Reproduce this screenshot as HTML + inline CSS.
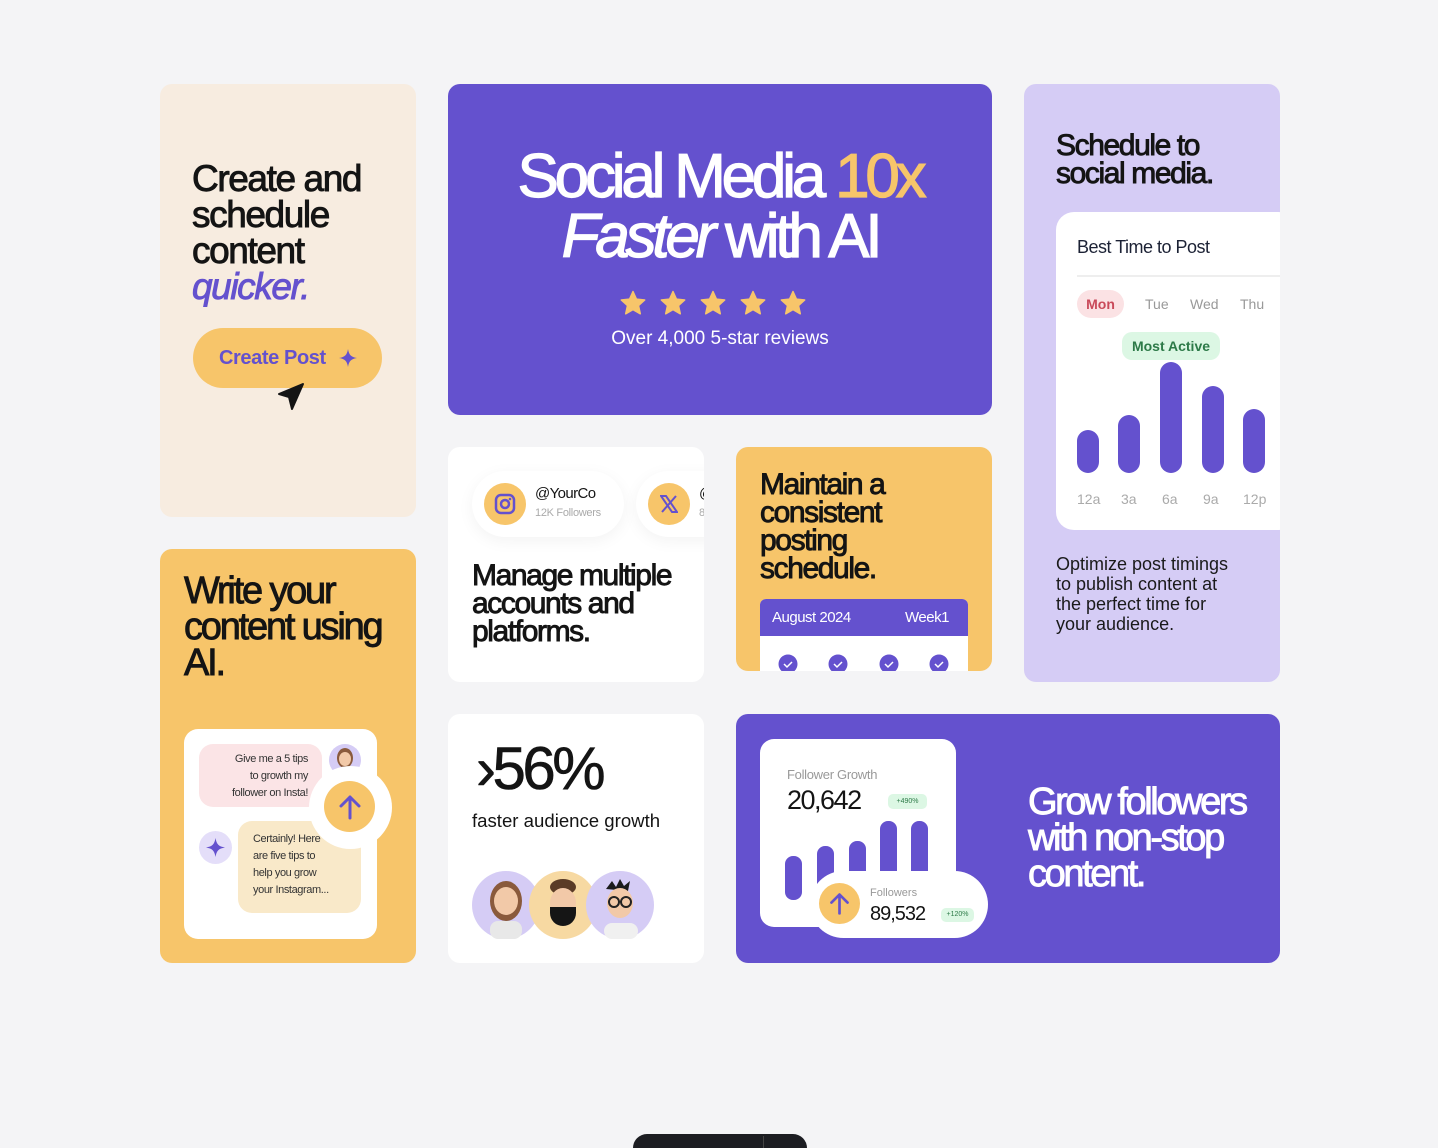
<!DOCTYPE html>
<html><head><meta charset="utf-8">
<style>
*{margin:0;padding:0;box-sizing:border-box}
html{width:1438px;height:1148px;overflow:hidden}
body{width:1438px;height:1148px;background:#f4f4f6;position:relative;overflow:hidden;font-family:"Liberation Sans",sans-serif;color:#141414}
.c{position:absolute;border-radius:12px;overflow:hidden}
.h{font-weight:400;-webkit-text-stroke:0.9px currentColor;line-height:0.95}
.a{position:absolute}
</style></head><body>

<!-- Card A -->
<div class="c" style="left:160px;top:84px;width:256px;height:433px;background:#f7ece0">
  <div class="a h" style="left:32px;top:77px;font-size:37px;line-height:36px;letter-spacing:-1.4px">Create and<br>schedule<br>content<br><span style="color:#6451ce;font-style:italic">quicker.</span></div>
  <div class="a" style="left:33px;top:244px;width:189px;height:60px;border-radius:30px;background:#f7c56a;color:#6451ce;font-weight:700;font-size:20px;letter-spacing:-0.4px;line-height:60px;padding-left:26px">Create Post
    <svg class="a" style="left:146px;top:21px" width="18" height="18" viewBox="0 0 18 18"><path d="M9 0C10 6 12 8 18 9C12 10 10 12 9 18C8 12 6 10 0 9C6 8 8 6 9 0Z" fill="#6451ce"/></svg>
  </div>
  <svg class="a" style="left:116px;top:298px" width="30" height="30" viewBox="0 0 30 30"><path d="M27 2L3 12L13 15L16 27Z" fill="#141414" stroke="#141414" stroke-linejoin="round" stroke-width="2"/></svg>
</div>

<!-- Card B hero -->
<div class="c" style="left:448px;top:84px;width:544px;height:331px;background:#6451ce;color:#fff;text-align:center">
  <div class="a h" style="left:0;width:544px;top:63px;font-size:62px;line-height:60px;letter-spacing:-4.2px;-webkit-text-stroke:1.2px #fff">Social Media <span style="color:#f7c56a;-webkit-text-stroke:1.2px #f7c56a">10x</span><br><i>Faster</i> with AI</div>
  <div class="a" style="left:0;width:544px;top:206px;font-size:0">
    <svg width="200" height="30" viewBox="0 0 200 30"><g fill="#f7c56a">
      <path id="s" d="M13 1.5l3.4 7.6 8.3.9-6.2 5.6 1.8 8.2L13 19.6 5.7 23.8l1.8-8.2L1.3 10l8.3-.9z" stroke="#f7c56a" stroke-linejoin="round" stroke-width="1.5"/>
      <use href="#s" x="40"/><use href="#s" x="80"/><use href="#s" x="120"/><use href="#s" x="160"/></g></svg>
  </div>
  <div class="a" style="left:0;width:544px;top:244px;font-size:19px">Over 4,000 5-star reviews</div>
</div>

<!-- Card C -->
<div class="c" style="left:1024px;top:84px;width:256px;height:598px;background:#d5ccf5">
  <div class="a h" style="left:32px;top:48px;font-size:30px;line-height:28px;letter-spacing:-1.4px">Schedule to<br>social media.</div>
  <div class="a" style="left:32px;top:128px;width:240px;height:318px;background:#fff;border-radius:18px">
    <div class="a" style="left:21px;top:25px;font-size:18px;color:#1c2235;letter-spacing:-0.5px">Best Time to Post</div>
    <div class="a" style="left:21px;top:63px;width:230px;height:2px;background:#eee"></div>
    <div class="a" style="left:21px;top:78px;width:47px;height:28px;border-radius:14px;background:#fbe2e4;color:#c94a5a;font-weight:700;font-size:14px;line-height:28px;text-align:center">Mon</div>
    <div class="a" style="left:89px;top:84px;font-size:14px;color:#999">Tue</div>
    <div class="a" style="left:134px;top:84px;font-size:14px;color:#999">Wed</div>
    <div class="a" style="left:184px;top:84px;font-size:14px;color:#999">Thu</div>
    <div class="a" style="left:66px;top:120px;width:98px;height:28px;border-radius:10px;background:#dcf7e4;color:#2d7a48;font-weight:700;font-size:14px;line-height:28px;text-align:center">Most Active</div>
    <div class="a" style="left:21px;top:218px;width:22px;height:43px;border-radius:11px;background:#6451ce"></div>
    <div class="a" style="left:62px;top:203px;width:22px;height:58px;border-radius:11px;background:#6451ce"></div>
    <div class="a" style="left:104px;top:150px;width:22px;height:111px;border-radius:11px;background:#6451ce"></div>
    <div class="a" style="left:146px;top:174px;width:22px;height:87px;border-radius:11px;background:#6451ce"></div>
    <div class="a" style="left:187px;top:197px;width:22px;height:64px;border-radius:11px;background:#6451ce"></div>
    <div class="a" style="left:21px;top:279px;font-size:14px;color:#aaa">12a</div>
    <div class="a" style="left:65px;top:279px;font-size:14px;color:#aaa">3a</div>
    <div class="a" style="left:106px;top:279px;font-size:14px;color:#aaa">6a</div>
    <div class="a" style="left:147px;top:279px;font-size:14px;color:#aaa">9a</div>
    <div class="a" style="left:187px;top:279px;font-size:14px;color:#aaa">12p</div>
  </div>
  <div class="a" style="left:32px;top:470px;font-size:18px;line-height:20px;color:#1a1a1a;white-space:nowrap">Optimize post timings<br>to publish content at<br>the perfect time for<br>your audience.</div>
</div>

<!-- Card D -->
<div class="c" style="left:448px;top:447px;width:256px;height:235px;background:#fff">
  <div class="a" style="left:24px;top:24px;width:152px;height:66px;border-radius:33px;background:#fff;box-shadow:0 4px 16px rgba(0,0,0,0.05)">
    <div class="a" style="left:12px;top:12px;width:42px;height:42px;border-radius:50%;background:#f7c56a"></div>
    <svg class="a" style="left:22px;top:22px" width="22" height="22" viewBox="0 0 22 22"><rect x="2" y="2" width="18" height="18" rx="5" fill="none" stroke="#6451ce" stroke-width="2.5"/><circle cx="11" cy="11" r="4" fill="none" stroke="#6451ce" stroke-width="2.5"/><circle cx="16" cy="6" r="1.3" fill="#6451ce"/></svg>
    <div class="a" style="left:63px;top:14px;font-size:15px;letter-spacing:-0.6px">@YourCo</div>
    <div class="a" style="left:63px;top:36px;font-size:11px;color:#aaa;letter-spacing:-0.3px">12K Followers</div>
  </div>
  <div class="a" style="left:188px;top:24px;width:120px;height:66px;border-radius:33px;background:#fff;box-shadow:0 4px 16px rgba(0,0,0,0.05)">
    <div class="a" style="left:12px;top:12px;width:42px;height:42px;border-radius:50%;background:#f7c56a"></div>
    <svg class="a" style="left:24px;top:24px" width="18" height="18" viewBox="0 0 18 18"><path d="M1 1h5l11 16h-5Z" fill="none" stroke="#6451ce" stroke-width="2"/><path d="M16 1L2 17" stroke="#6451ce" stroke-width="2"/></svg>
    <div class="a" style="left:63px;top:14px;font-size:15px">@</div>
    <div class="a" style="left:63px;top:36px;font-size:11px;color:#aaa">8</div>
  </div>
  <div class="a h" style="left:24px;top:115px;font-size:30px;line-height:28px;letter-spacing:-1.4px">Manage multiple<br>accounts and<br>platforms.</div>
</div>

<!-- Card E -->
<div class="c" style="left:736px;top:447px;width:256px;height:224px;background:#f7c56a">
  <div class="a h" style="left:24px;top:24px;font-size:30px;line-height:28px;letter-spacing:-1.4px">Maintain a<br>consistent<br>posting<br>schedule.</div>
  <div class="a" style="left:24px;top:152px;width:208px;height:80px;background:#fff;border-radius:6px 6px 0 0;overflow:hidden">
    <div style="height:37px;background:#6451ce;color:#fff;font-size:15px;line-height:37px;letter-spacing:-0.5px;padding-left:12px">August 2024<span style="position:absolute;left:145px">Week1</span></div>
    <svg class="a" style="left:18px;top:55px" width="180" height="20" viewBox="0 0 180 20"><g fill="#6451ce"><circle cx="10" cy="10" r="9.5"/><circle cx="60" cy="10" r="9.5"/><circle cx="111" cy="10" r="9.5"/><circle cx="161" cy="10" r="9.5"/></g><g fill="none" stroke="#fff" stroke-width="1.5"><path d="M6 10l3 3 5-5"/><path d="M56 10l3 3 5-5"/><path d="M107 10l3 3 5-5"/><path d="M157 10l3 3 5-5"/></g></svg>
  </div>
</div>

<!-- Card F -->
<div class="c" style="left:160px;top:549px;width:256px;height:414px;background:#f7c56a">
  <div class="a h" style="left:24px;top:24px;font-size:38px;line-height:36px;letter-spacing:-2.2px">Write your<br>content using<br>AI.</div>
  <div class="a" style="left:24px;top:180px;width:193px;height:210px;background:#fff;border-radius:14px">
    <div class="a" style="left:15px;top:15px;width:123px;height:63px;background:#fbe4e6;border-radius:14px;font-size:11px;line-height:17px;text-align:right;padding:7px 14px 0 0;letter-spacing:-0.4px;color:#333">Give me a 5 tips<br>to growth my<br>follower on Insta!</div>
    <div class="a" style="left:145px;top:15px;width:32px;height:32px;border-radius:50%;background:#d5ccf5;overflow:hidden">
      <svg width="32" height="32" viewBox="0 0 32 32"><ellipse cx="16" cy="14" rx="8" ry="10" fill="#8a5a3c"/><ellipse cx="16" cy="15" rx="6" ry="7" fill="#f2c9a8"/><rect x="9" y="25" width="14" height="8" rx="4" fill="#eee"/></svg>
    </div>
    <div class="a" style="left:15px;top:102px;width:33px;height:33px;border-radius:50%;background:#e4def9"></div>
    <svg class="a" style="left:22px;top:109px" width="19" height="19" viewBox="0 0 18 18"><path d="M9 0C10 6 12 8 18 9C12 10 10 12 9 18C8 12 6 10 0 9C6 8 8 6 9 0Z" fill="#6451ce"/></svg>
    <div class="a" style="left:54px;top:92px;width:123px;height:92px;background:#f9e9c9;border-radius:14px;font-size:11px;line-height:17px;padding:10px 0 0 15px;letter-spacing:-0.4px;color:#333">Certainly! Here<br>are five tips to<br>help you grow<br>your Instagram...</div>
    <div class="a" style="left:125px;top:37px;width:83px;height:83px;border-radius:50%;background:#fff"></div>
    <div class="a" style="left:140px;top:52px;width:51px;height:51px;border-radius:50%;background:#f7c56a"></div>
    <svg class="a" style="left:152px;top:64px" width="28" height="28" viewBox="0 0 28 28"><path d="M14 25V4M5 13l9-9 9 9" fill="none" stroke="#6451ce" stroke-width="3" stroke-linecap="round" stroke-linejoin="round"/></svg>
  </div>
</div>

<!-- Card G -->
<div class="c" style="left:448px;top:714px;width:256px;height:249px;background:#fff">
  <div class="a" style="left:28px;top:20px;font-size:60px;letter-spacing:-3.5px;font-weight:400;-webkit-text-stroke:0.6px #141414">&#8250;56%</div>
  <div class="a" style="left:24px;top:96px;font-size:18.6px">faster audience growth</div>
  <svg class="a" style="left:24px;top:157px" width="182" height="68" viewBox="0 0 182 68">
    <circle cx="34" cy="34" r="34" fill="#d5ccf5"/><ellipse cx="34" cy="30" rx="16" ry="20" fill="#8a5a3c"/><ellipse cx="34" cy="30" rx="12" ry="14" fill="#f2c9a8"/><rect x="18" y="50" width="32" height="18" rx="8" fill="#e8e8e8"/>
    <circle cx="91" cy="34" r="34" fill="#f7d9a2"/><ellipse cx="91" cy="16" rx="13" ry="8" fill="#5a3b26"/><ellipse cx="91" cy="32" rx="13" ry="15" fill="#f2c9a8"/><path d="M78 36h26v6a13 13 0 0 1-26 0z" fill="#151515"/>
    <circle cx="148" cy="34" r="34" fill="#d5ccf5"/><path d="M134 18l6-8 4 6 4-8 4 7 6-5-2 10z" fill="#1b1b1b"/><ellipse cx="148" cy="32" rx="13" ry="15" fill="#f2c9a8"/><circle cx="142" cy="31" r="5" fill="none" stroke="#222" stroke-width="2"/><circle cx="154" cy="31" r="5" fill="none" stroke="#222" stroke-width="2"/><rect x="132" y="52" width="34" height="16" rx="8" fill="#f0f0f0"/>
  </svg>
</div>

<!-- Card H -->
<div class="c" style="left:736px;top:714px;width:544px;height:249px;background:#6451ce">
  <div class="a" style="left:24px;top:25px;width:196px;height:188px;background:#fff;border-radius:14px">
    <div class="a" style="left:27px;top:28px;font-size:13px;color:#999;letter-spacing:-0.3px">Follower Growth</div>
    <div class="a" style="left:27px;top:46px;font-size:27px;letter-spacing:-1.5px">20,642</div>
    <div class="a" style="left:128px;top:55px;width:39px;height:15px;border-radius:5px;background:#dcf7e4;font-size:7px;color:#2d7a48;text-align:center;line-height:15px">+490%</div>
    <div class="a" style="left:25px;top:117px;width:17px;height:44px;border-radius:8px;background:#6451ce"></div>
    <div class="a" style="left:57px;top:107px;width:17px;height:70px;border-radius:8px;background:#6451ce"></div>
    <div class="a" style="left:89px;top:102px;width:17px;height:70px;border-radius:8px 8px 0 0;background:#6451ce"></div>
    <div class="a" style="left:120px;top:82px;width:17px;height:90px;border-radius:8px 8px 0 0;background:#6451ce"></div>
    <div class="a" style="left:151px;top:82px;width:17px;height:90px;border-radius:8px 8px 0 0;background:#6451ce"></div>
  </div>
  <div class="a" style="left:74px;top:157px;width:178px;height:67px;border-radius:34px;background:#fff">
    <div class="a" style="left:9px;top:12px;width:41px;height:41px;border-radius:50%;background:#f7c56a"></div>
    <svg class="a" style="left:17px;top:20px" width="25" height="25" viewBox="0 0 28 28"><path d="M14 25V4M5 13l9-9 9 9" fill="none" stroke="#6451ce" stroke-width="3" stroke-linecap="round" stroke-linejoin="round"/></svg>
    <div class="a" style="left:60px;top:16px;font-size:11px;color:#999">Followers</div>
    <div class="a" style="left:60px;top:32px;font-size:20px;letter-spacing:-1px">89,532</div>
    <div class="a" style="left:131px;top:37px;width:33px;height:14px;border-radius:5px;background:#dcf7e4;font-size:7px;color:#2d7a48;text-align:center;line-height:14px">+120%</div>
  </div>
  <div class="a h" style="left:292px;top:70px;font-size:38px;line-height:36px;letter-spacing:-2.4px;color:#fff">Grow followers<br>with non-stop<br>content.</div>
</div>

<!-- bottom bar -->
<div class="a" style="left:633px;top:1134px;width:174px;height:14px;border-radius:16px 16px 0 0;background:#1c1d22"></div>
<div class="a" style="left:763px;top:1136px;width:1px;height:12px;background:#444"></div>
</body></html>
